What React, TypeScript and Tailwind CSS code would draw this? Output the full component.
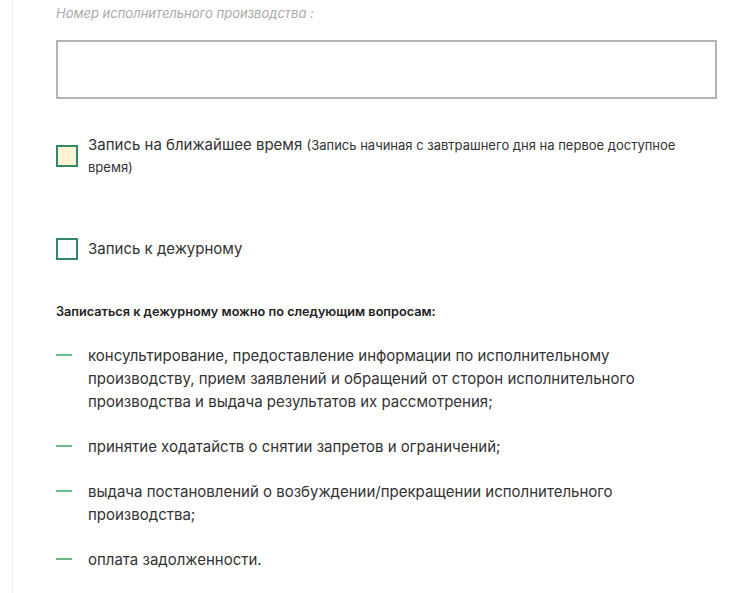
import React from "react";

const items = [
  "консультирование, предоставление информации по исполнительному производству, прием заявлений и обращений от сторон исполнительного производства и выдача результатов их рассмотрения;",
  "принятие ходатайств о снятии запретов и ограничений;",
  "выдача постановлений о возбуждении/прекращении исполнительного производства;",
  "оплата задолженности.",
];

const Checkbox = ({ checked }: { checked?: boolean }) => (
  <span
    className={
      "block h-[22px] w-[22px] shrink-0 border-2 border-[#2f8a6c] " +
      (checked ? "bg-[#fbf3d2]" : "bg-white")
    }
  />
);

export default function App() {
  return (
    <div className="min-h-[593px] bg-white font-['Inter','Noto_Sans',sans-serif] text-[#333]">
      <div className="ml-[12px] min-h-[593px] border-l border-[#eeeeee] pl-[43px] pr-[37px] pt-[4px]">
        <label className="block text-[13px] italic leading-[18px] text-[#aaaaaa]">
          Номер исполнительного производства :
        </label>
        <input
          type="text"
          className="mt-[18px] block h-[59px] w-full border-2 border-[#b4b4b4] bg-white px-3 outline-none"
        />

        <div className="mt-[35px] flex items-center gap-[10px]">
          <Checkbox checked />
          <p className="max-w-[600px] text-[15px] leading-[22px]">
            Запись на ближайшее время{" "}
            <span className="text-[13px]">
              (Запись начиная с завтрашнего дня на первое доступное время)
            </span>
          </p>
        </div>

        <div className="mt-[60px] flex items-center gap-[10px]">
          <Checkbox />
          <p className="text-[15px] leading-[22px]">Запись к дежурному</p>
        </div>

        <h4 className="mt-[43px] text-[12.7px] font-semibold leading-[18px] text-[#222]">
          Записаться к дежурному можно по следующим вопросам:
        </h4>

        <ul className="mt-[23px] flex flex-col gap-[22px]">
          {items.map((t) => (
            <li key={t} className="flex gap-[16px] text-[15px] leading-[23px]">
              <span className="mt-[10px] block h-[2px] w-[16px] shrink-0 bg-[#6cba8c]" />
              <span className="max-w-[560px]">{t}</span>
            </li>
          ))}
        </ul>
      </div>
    </div>
  );
}
